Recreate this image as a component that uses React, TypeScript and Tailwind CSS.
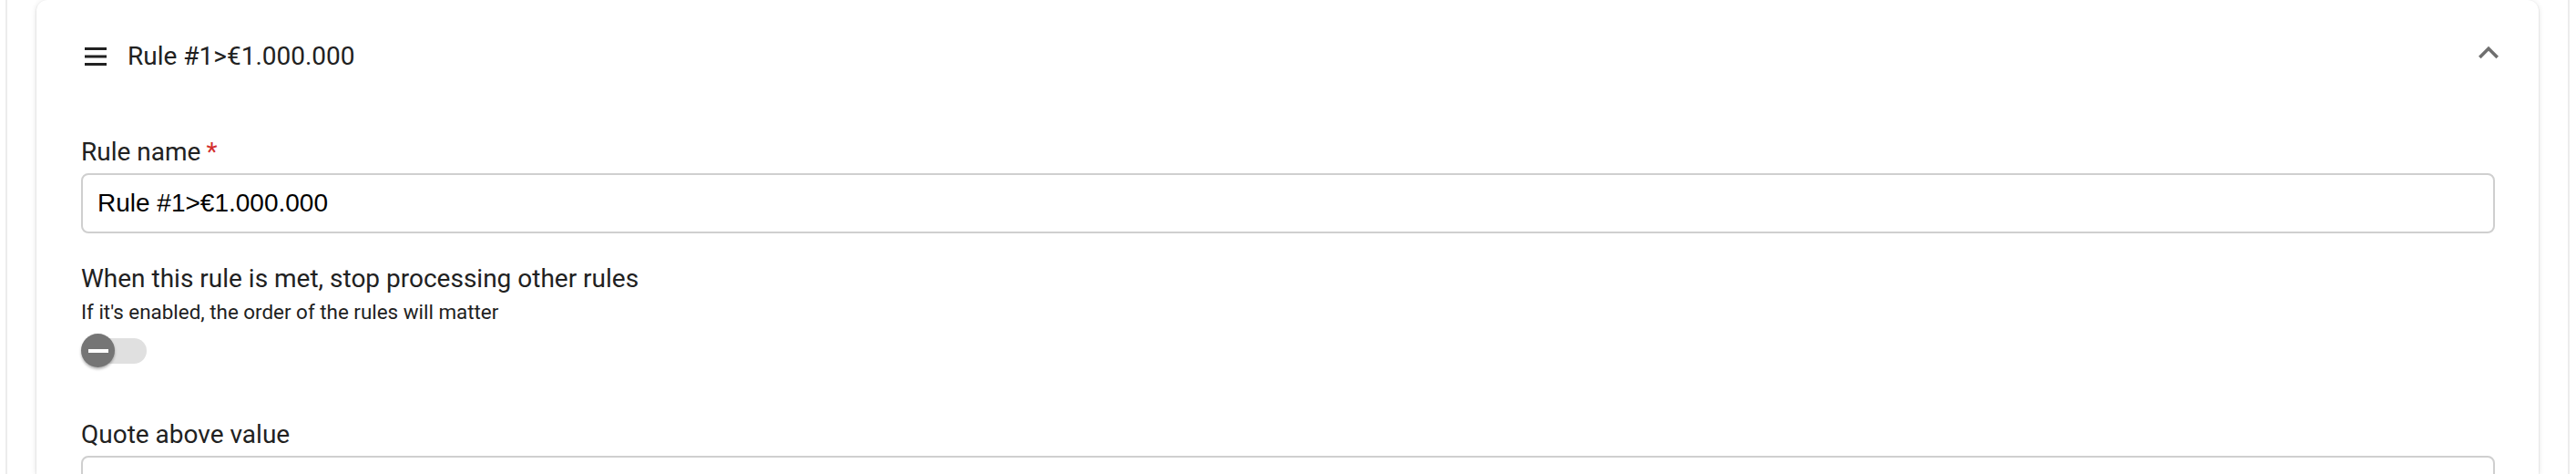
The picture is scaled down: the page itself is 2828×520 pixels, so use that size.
import React from 'react'

function MenuIcon() {
  return (
    <svg width="32" height="32" viewBox="0 0 32 32" className="shrink-0 text-[#212121]">
      <rect x="4" y="6" width="24" height="3" fill="currentColor" />
      <rect x="4" y="14.5" width="24" height="3" fill="currentColor" />
      <rect x="4" y="23" width="24" height="3" fill="currentColor" />
    </svg>
  )
}

function ExpandLess() {
  return (
    <svg width="44" height="44" viewBox="0 0 24 24" className="shrink-0 text-[#6f6f6f]">
      <path fill="currentColor" d="M12 8l-6 6 1.41 1.41L12 10.83l4.59 4.58L18 14z" />
    </svg>
  )
}

function FieldLabel({ children, required }: { children: React.ReactNode; required?: boolean }) {
  return (
    <div className="text-[28px] leading-[36px] text-[#212121]">
      {children}
      {required && <span className="ml-[6px] text-[#d32f2f]">*</span>}
    </div>
  )
}

function TextInput({ value }: { value?: string }) {
  return (
    <div className="mt-[5px] flex h-[66px] items-center rounded-[8px] border-2 border-[#cfcfcf] px-[16px] font-['Liberation_Sans',Arial,sans-serif] text-[28px] text-black">
      {value}
    </div>
  )
}

function Toggle() {
  return (
    <div className="relative mt-[9px] h-[40px] w-[74px]">
      <div className="absolute left-[6px] top-[6px] h-[28px] w-[66px] rounded-full bg-[#e0e0e0]" />
      <div className="absolute left-0 top-[1px] flex h-[37px] w-[37px] items-center justify-center rounded-full bg-[#757575] shadow-[0_2px_3px_rgba(0,0,0,0.3)]">
        <div className="h-[4px] w-[22px] bg-white" />
      </div>
    </div>
  )
}

export default function App() {
  return (
    <div className="h-[520px] w-[2828px] overflow-hidden bg-white font-['Roboto',sans-serif]">
      <div className="ml-[6px] h-full w-[2815px] border-x-2 border-[#ececec] px-[32px]">
        <div className="h-full rounded-t-[12px] bg-white pl-[49px] pr-[48px] shadow-[0_2px_2px_-1px_rgba(0,0,0,0.2),0_1px_2px_0_rgba(0,0,0,0.14),0_1px_6px_0_rgba(0,0,0,0.12)]">
          <div className="flex h-[124px] items-center">
            <MenuIcon />
            <span className="ml-[19px] text-[28px] leading-[32px] text-[#212121]">Rule #1&gt;€1.000.000</span>
            <div className="mb-[9px] -mr-[15px] ml-auto">
              <ExpandLess />
            </div>
          </div>

          <div className="mt-[25px]">
            <FieldLabel required>Rule name</FieldLabel>
            <TextInput value="Rule #1>€1.000.000" />
          </div>

          <div className="mt-[32px]">
            <div className="text-[28px] leading-[36px] text-[#212121]">
              When this rule is met, stop processing other rules
            </div>
            <div className="mt-[4px] text-[22.4px] leading-[28px] text-[#212121]">
              If it's enabled, the order of the rules will matter
            </div>
            <Toggle />
          </div>

          <div className="mt-[54px]">
            <FieldLabel>Quote above value</FieldLabel>
            <TextInput />
          </div>
        </div>
      </div>
    </div>
  )
}
